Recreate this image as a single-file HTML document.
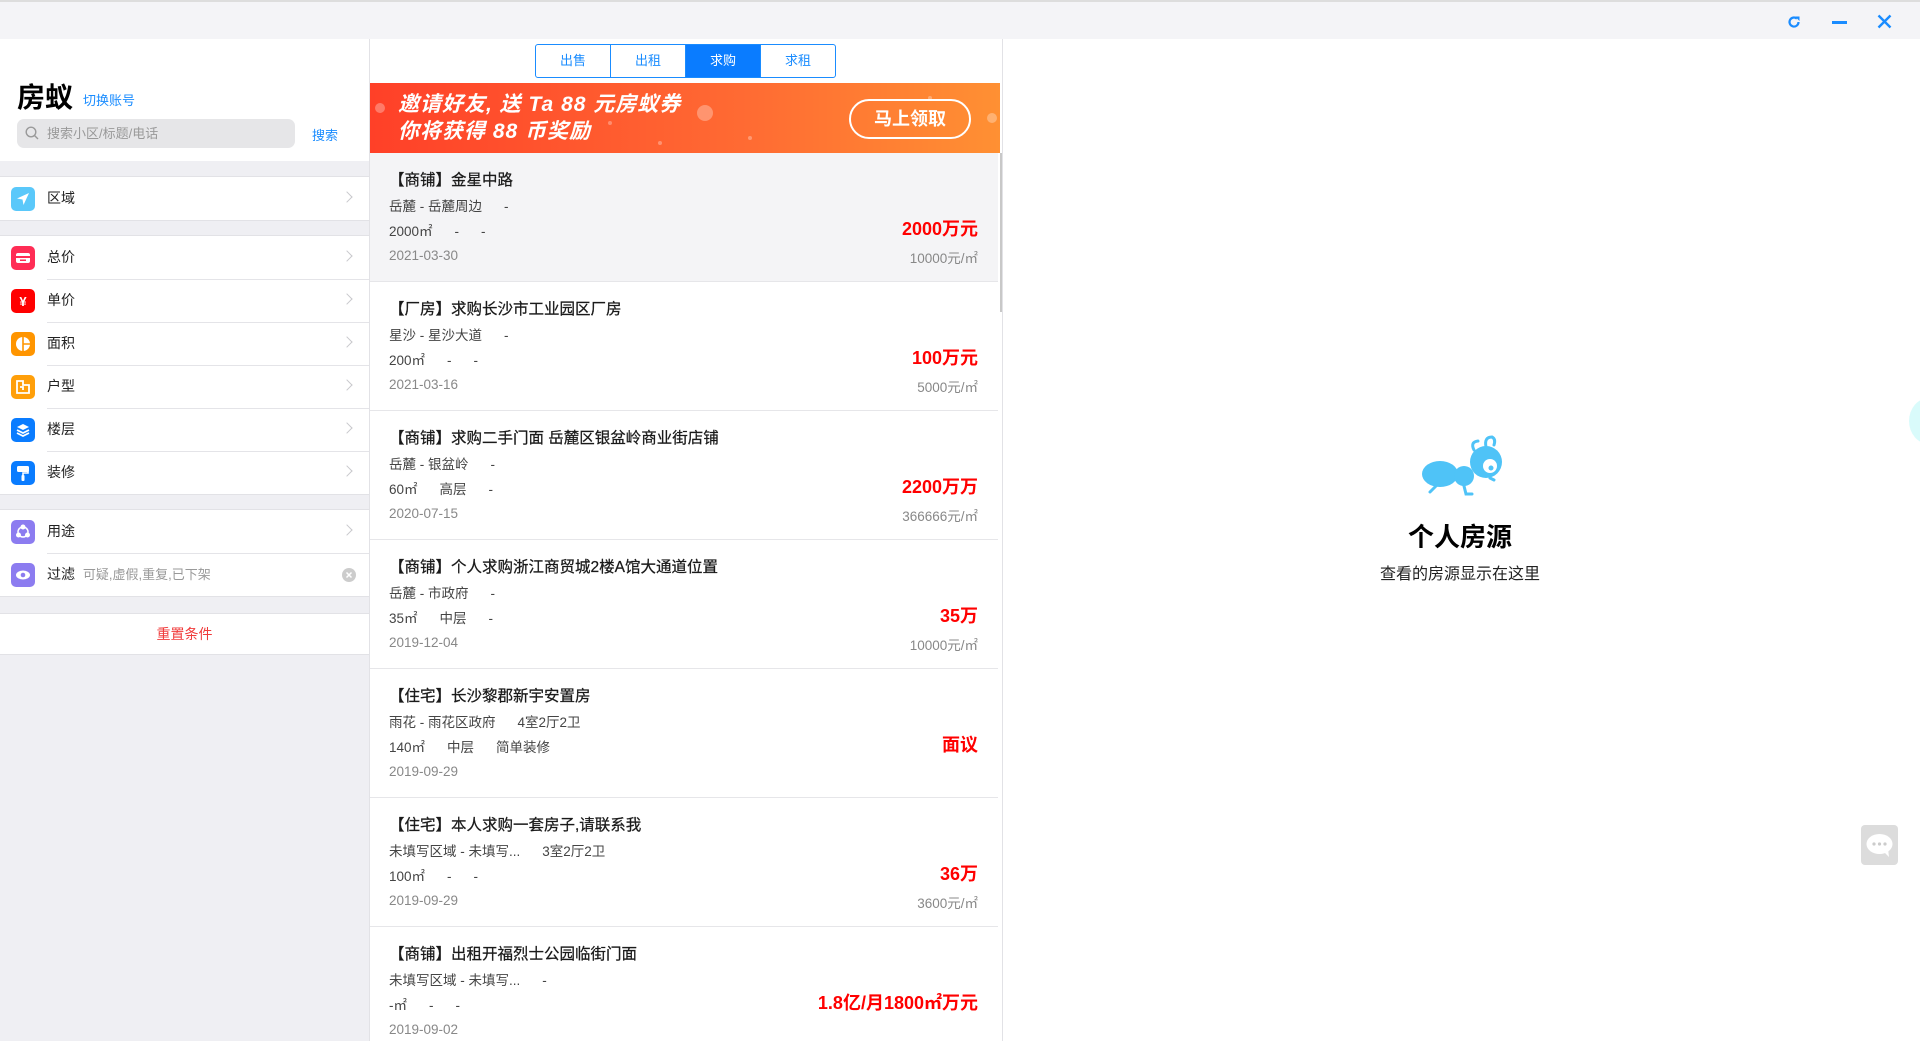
<!DOCTYPE html>
<html><head><meta charset="utf-8">
<style>
*{margin:0;padding:0;box-sizing:border-box}
body{width:1920px;height:1041px;overflow:hidden;background:#fff;font-family:"Liberation Sans","Noto Sans CJK SC",sans-serif;position:relative;color:#222}
.top{position:absolute;left:0;top:0;width:1920px;height:39px;background:#f4f4f7;border-top:2px solid #ddd}
.side{position:absolute;left:0;top:39px;width:370px;height:1002px;background:#efeff3;border-right:1px solid #e2e2e6}
.hd{position:absolute;left:0;top:0;width:369px;height:122px;background:#fff}
.logo{position:absolute;left:17px;top:37px;font-size:28px;font-weight:bold;color:#000}
.sw{position:absolute;left:83px;top:51px;font-size:13px;color:#1a8cff}
.sb{position:absolute;left:17px;top:80px;width:278px;height:29px;background:#e6e6e8;border-radius:7px;font-size:13px;color:#999;padding-left:30px;line-height:29px}
.sb svg{position:absolute;left:8px;top:7px}
.ss{position:absolute;left:312px;top:86px;font-size:13px;color:#1a8cff}
.grp{position:absolute;left:0;width:369px;background:#fff;border-top:1px solid #e2e2e6;border-bottom:1px solid #e2e2e6}
.row{height:43px;position:relative;font-size:14px;line-height:43px;padding-left:47px}
.row+.row:before{content:"";position:absolute;left:47px;right:0;top:0;border-top:1px solid #e4e4e8}
.ic{position:absolute;left:11px;top:10px;width:24px;height:24px;border-radius:5px}
.ic svg{position:absolute;left:0;top:0}
.ar{position:absolute;right:18px;top:16px;width:8px;height:8px;border-right:1.5px solid #c8c8cc;border-top:1.5px solid #c8c8cc;transform:rotate(45deg)}
.mid{position:absolute;left:370px;top:39px;width:632px;height:1002px;background:#fff;overflow:hidden}
.tabs{position:absolute;left:165px;top:5px;width:301px;height:34px;border:1px solid #1a8cff;border-radius:3px;display:flex;overflow:hidden}
.tabs div{flex:1;text-align:center;line-height:32px;font-size:13px;color:#1a8cff;border-left:1px solid #1a8cff}
.tabs div:first-child{border-left:none}
.tabs .on{background:#0a7cff;color:#fff}
.ban{position:absolute;left:0;top:44px;width:630px;height:70px;background:linear-gradient(90deg,#ff4028,#ff6b33 60%,#ff9033);color:#fff}
.ban .t{position:absolute;left:28px;top:8px;font-size:21px;font-style:italic;font-weight:bold;line-height:27px;letter-spacing:1px}
.ban .b{position:absolute;left:479px;top:16px;width:122px;height:40px;border:2px solid #fff;border-radius:20px;text-align:center;line-height:36px;font-size:18px;font-weight:bold}
.list{position:absolute;left:0;top:114px;width:628px}
.it{height:129px;border-bottom:1px solid #e6e6e9;position:relative;padding-left:19px}
.it .a{position:absolute;left:19px;top:15px;font-size:15.5px;color:#1a1a1a;-webkit-text-stroke:0.25px #1a1a1a}
.it .b{position:absolute;left:19px;top:42px;font-size:13.5px;color:#444}
.it .c{position:absolute;left:19px;top:67px;font-size:13.5px;color:#444}
.it .d{position:absolute;left:19px;top:95px;font-size:13.5px;color:#888}
.it .p{position:absolute;right:20px;top:62px;font-size:18px;font-weight:bold;color:#f00}
.it .u{position:absolute;right:20px;top:94px;font-size:13.5px;color:#888}
.sp{display:inline-block;width:22px}
.scr{position:absolute;left:1000px;top:153px;width:3px;height:159px;background:#c8c8c8}
.rt{position:absolute;left:1002px;top:39px;width:918px;height:1002px;border-left:1px solid #e2e2e6}
</style></head><body>
<div class="top">
<svg style="position:absolute;left:1786px;top:12px" width="16" height="16" viewBox="0 0 16 16"><path d="M12.5 8a4.5 4.5 0 1 1-1.6-3.4" fill="none" stroke="#1a8cff" stroke-width="2.2"/><path d="M9 2.5h4.5V7z" fill="#1a8cff"/></svg>
<div style="position:absolute;left:1832px;top:19px;width:15px;height:2.5px;background:#1a8cff"></div>
<svg style="position:absolute;left:1877px;top:12px" width="15" height="15" viewBox="0 0 15 15"><path d="M1.5 1.5l12 12M13.5 1.5l-12 12" stroke="#1a8cff" stroke-width="2.4"/></svg>
</div>
<div class="side">
<div class="hd">
<div class="logo">房蚁</div><div class="sw">切换账号</div>
<div class="sb"><svg width="14" height="14" viewBox="0 0 14 14"><circle cx="6" cy="6" r="4.8" fill="none" stroke="#999" stroke-width="1.4"/><path d="M9.5 9.5l3.5 3.5" stroke="#999" stroke-width="1.4"/></svg>搜索小区/标题/电话</div>
<div class="ss">搜索</div>
</div>
<div class="grp" style="top:137px"><div class="row"><span class="ic" style="background:#5ac8fa"><svg width="24" height="24"><path d="M18 6L6 11.5l5.5 1 1 5.5z" fill="#fff"/></svg></span>区域<i class="ar"></i></div></div>
<div class="grp" style="top:196px">
<div class="row"><span class="ic" style="background:#ff2d55"><svg width="24" height="24"><rect x="5" y="7" width="14" height="10" rx="2" fill="#fff"/><rect x="5" y="10" width="14" height="2" fill="#ff2d55"/><rect x="9" y="13.5" width="6" height="1.5" fill="#ff2d55"/></svg></span>总价<i class="ar"></i></div>
<div class="row"><span class="ic" style="background:#f00"><svg width="24" height="24"><text x="12" y="17" font-size="13" font-weight="bold" fill="#fff" text-anchor="middle" font-family="Liberation Sans">¥</text></svg></span>单价<i class="ar"></i></div>
<div class="row"><span class="ic" style="background:#ff9500"><svg width="24" height="24"><circle cx="12" cy="12" r="7" fill="#fff"/><path d="M12 5v14M12 12h7" stroke="#ff9500" stroke-width="1.6"/></svg></span>面积<i class="ar"></i></div>
<div class="row"><span class="ic" style="background:#ff9f0a"><svg width="24" height="24"><path d="M6 6h6v4h6v8H6z M9 12h3v3" fill="none" stroke="#fff" stroke-width="1.8"/></svg></span>户型<i class="ar"></i></div>
<div class="row"><span class="ic" style="background:#0a7cff"><svg width="24" height="24"><path d="M6 9l6-3 6 3-6 3z" fill="#fff"/><path d="M6 12l6 3 6-3M6 15l6 3 6-3" fill="none" stroke="#fff" stroke-width="1.8"/></svg></span>楼层<i class="ar"></i></div>
<div class="row"><span class="ic" style="background:#0a7cff"><svg width="24" height="24"><rect x="6" y="5" width="12" height="6" rx="1.5" fill="#fff"/><path d="M17 9v3h-5v3" fill="none" stroke="#fff" stroke-width="1.6"/><rect x="10.5" y="14" width="3" height="6" rx="1" fill="#fff"/></svg></span>装修<i class="ar"></i></div>
</div>
<div class="grp" style="top:470px">
<div class="row"><span class="ic" style="background:#8c7cf0"><svg width="24" height="24"><circle cx="12" cy="12" r="5" fill="none" stroke="#fff" stroke-width="1.5"/><circle cx="12" cy="7" r="2.5" fill="#fff"/><circle cx="7.5" cy="15" r="2.5" fill="#fff"/><circle cx="16.5" cy="15" r="2.5" fill="#fff"/></svg></span>用途<i class="ar"></i></div>
<div class="row"><span class="ic" style="background:#8c7cf0"><svg width="24" height="24"><ellipse cx="12" cy="12" rx="7" ry="4.5" fill="#fff"/><circle cx="12" cy="12" r="2.3" fill="#8c7cf0"/></svg></span>过滤 <span style="color:#999;font-size:13px;margin-left:4px">可疑,虚假,重复,已下架</span><svg style="position:absolute;right:13px;top:15px" width="14" height="14"><circle cx="7" cy="7" r="7" fill="#ccc"/><path d="M4.5 4.5l5 5M9.5 4.5l-5 5" stroke="#fff" stroke-width="1.5"/></svg></div>
</div>
<div class="grp" style="top:574px;height:42px;text-align:center;line-height:40px;font-size:14px;color:#f03a3a">重置条件</div>
</div>
<div class="mid">
<div class="tabs"><div>出售</div><div>出租</div><div class="on">求购</div><div>求租</div></div>
<div class="ban">
<svg style="position:absolute;left:0;top:0" width="630" height="70"><g fill="#fff" opacity=".3"><circle cx="10" cy="25" r="5"/><circle cx="335" cy="30" r="8"/><circle cx="622" cy="35" r="5"/><circle cx="240" cy="40" r="2"/><circle cx="290" cy="60" r="2"/><circle cx="380" cy="55" r="2"/><circle cx="560" cy="15" r="2"/></g></svg>
<div class="t">邀请好友, 送 Ta 88 元房蚁券<br>你将获得 88 币奖励</div>
<div class="b">马上领取</div>
</div>
<div class="list">
<div class="it" style="background:#f4f4f6"><div class="a">【商铺】金星中路</div><div class="b">岳麓 - 岳麓周边<span class="sp"></span>-</div><div class="c">2000㎡<span class="sp"></span>-<span class="sp"></span>-</div><div class="d">2021-03-30</div><div class="p">2000万元</div><div class="u">10000元/㎡</div></div>
<div class="it"><div class="a">【厂房】求购长沙市工业园区厂房</div><div class="b">星沙 - 星沙大道<span class="sp"></span>-</div><div class="c">200㎡<span class="sp"></span>-<span class="sp"></span>-</div><div class="d">2021-03-16</div><div class="p">100万元</div><div class="u">5000元/㎡</div></div>
<div class="it"><div class="a">【商铺】求购二手门面 岳麓区银盆岭商业街店铺</div><div class="b">岳麓 - 银盆岭<span class="sp"></span>-</div><div class="c">60㎡<span class="sp"></span>高层<span class="sp"></span>-</div><div class="d">2020-07-15</div><div class="p">2200万万</div><div class="u">366666元/㎡</div></div>
<div class="it"><div class="a">【商铺】个人求购浙江商贸城2楼A馆大通道位置</div><div class="b">岳麓 - 市政府<span class="sp"></span>-</div><div class="c">35㎡<span class="sp"></span>中层<span class="sp"></span>-</div><div class="d">2019-12-04</div><div class="p">35万</div><div class="u">10000元/㎡</div></div>
<div class="it"><div class="a">【住宅】长沙黎郡新宇安置房</div><div class="b">雨花 - 雨花区政府<span class="sp"></span>4室2厅2卫</div><div class="c">140㎡<span class="sp"></span>中层<span class="sp"></span>简单装修</div><div class="d">2019-09-29</div><div class="p">面议</div></div>
<div class="it"><div class="a">【住宅】本人求购一套房子,请联系我</div><div class="b">未填写区域 - 未填写...<span class="sp"></span>3室2厅2卫</div><div class="c">100㎡<span class="sp"></span>-<span class="sp"></span>-</div><div class="d">2019-09-29</div><div class="p">36万</div><div class="u">3600元/㎡</div></div>
<div class="it"><div class="a">【商铺】出租开福烈士公园临街门面</div><div class="b">未填写区域 - 未填写...<span class="sp"></span>-</div><div class="c">-㎡<span class="sp"></span>-<span class="sp"></span>-</div><div class="d">2019-09-02</div><div class="p">1.8亿/月1800㎡万元</div></div>
</div>
</div>
<div class="scr"></div>
<div class="rt"></div>
<svg style="position:absolute;left:1410px;top:430px" width="110" height="75" viewBox="1410 430 110 75"><g fill="#4fc3f7"><ellipse cx="1440" cy="474" rx="18" ry="13"/><circle cx="1464" cy="476" r="10"/><circle cx="1486" cy="462" r="16"/></g><g fill="none" stroke="#4fc3f7" stroke-width="3" stroke-linecap="round"><path d="M1474 450q-4-8 4-9"/><path d="M1486 447q-2-10 6-10q4 2 2 8"/><path d="M1464 486l2 8h6"/><path d="M1436 486l-6 6"/><path d="M1490 478l4 2"/></g><circle cx="1490" cy="466" r="7" fill="#fff"/><circle cx="1491" cy="468" r="2.5" fill="#4fc3f7"/></svg>
<div style="position:absolute;left:1360px;top:517px;width:200px;text-align:center;font-size:26px;font-weight:bold;color:#000">个人房源</div>
<div style="position:absolute;left:1360px;top:560px;width:200px;text-align:center;font-size:16px;color:#222">查看的房源显示在这里</div>
<div style="position:absolute;left:1909px;top:398px;width:40px;height:46px;border-radius:50%;background:#d9fbfb"></div>
<div style="position:absolute;left:1861px;top:825px;width:37px;height:40px;border-radius:4px;background:#dcdcdc"><svg width="37" height="40"><ellipse cx="18.5" cy="19" rx="13" ry="10" fill="#fff"/><path d="M22 26l6 6-1-8z" fill="#fff"/><g fill="#ccc"><circle cx="13" cy="19" r="1.6"/><circle cx="18.5" cy="19" r="1.6"/><circle cx="24" cy="19" r="1.6"/></g></svg></div>
</body></html>
